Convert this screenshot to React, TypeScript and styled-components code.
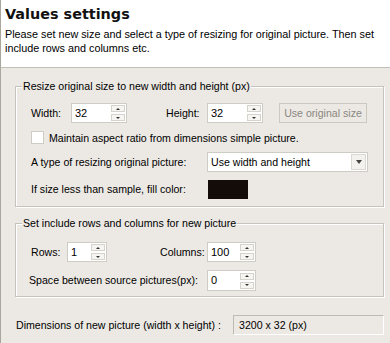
import React from "react";
import styled, { createGlobalStyle } from "styled-components";

const Global = createGlobalStyle`
  html, body { margin: 0; padding: 0; background: #ECE9E4; }
  body { font-family: "Liberation Sans", Arial, sans-serif; font-size: 10.6px; color: #000; }
  * { box-sizing: border-box; }
`;

const Page = styled.div`
  width: 390px;
  height: 343px;
  background: #ECE9E4;
  border-left: 1px solid #a9a69e;
  overflow: hidden;
`;

const Header = styled.header`
  background: #fff;
  height: 68px;
  padding: 5px 0 0 4px;
  border-bottom: 1px solid #c2bfb8;
`;

const Title = styled.h1`
  margin: 0;
  font-family: "DejaVu Sans", Verdana, sans-serif;
  font-weight: bold;
  font-size: 14.4px;
  line-height: 18px;
  color: #111;
`;

const Description = styled.p`
  margin: 4px 0 0;
  width: 382px;
  font-size: 10.8px;
  line-height: 14px;
`;

const Body = styled.main`
  padding: 0 6px 0 14px;
`;

const Group = styled.section<{ $top: number }>`
  margin-top: ${(p) => p.$top}px;
  border: 1px solid #c6c3bb;
  box-shadow: inset 1px 1px 0 #fff, 1px 1px 0 #fff;
`;

const Legend = styled.div`
  width: fit-content;
  margin: -7px 0 0 6px;
  padding: 0 1px;
  background: #ECE9E4;
  line-height: 13px;
`;

const Grid = styled.div<{ $cols: string; $pad: string }>`
  display: grid;
  grid-template-columns: ${(p) => p.$cols};
  row-gap: 8px;
  padding: ${(p) => p.$pad};
  align-items: center;
`;

const Label = styled.span<{ $span?: string; $shift?: number }>`
  grid-column: ${(p) => p.$span || "auto"};
  margin-left: ${(p) => p.$shift || 0}px;
  white-space: nowrap;
  line-height: 13px;
`;

const SpinBox = styled.div<{ $w: number; $h: number }>`
  width: ${(p) => p.$w}px;
  height: ${(p) => p.$h}px;
  background: #fff;
  border: 1px solid #cfccc5;
  display: flex;
  align-items: center;
  justify-content: space-between;
  padding: 0 1px 0 3px;
`;

const SpinValue = styled.span`
  line-height: 13px;
  font-size: 11px;
`;

const SpinButtons = styled.div`
  display: flex;
  flex-direction: column;
  gap: 2px;
`;

const SpinButton = styled.div`
  width: 14px;
  height: 7px;
  border: 1px solid #d6d3cc;
  background: #f6f5f2;
  display: flex;
  align-items: center;
  justify-content: center;
`;

const Arrow = styled.span<{ $down?: boolean }>`
  width: 0;
  height: 0;
  border-left: 2px solid transparent;
  border-right: 2px solid transparent;
  ${(p) => (p.$down ? "border-top: 2px solid #333;" : "border-bottom: 2px solid #333;")}
`;

const Button = styled.div`
  height: 20px;
  border: 1px solid #cbc8c0;
  background: #ECE9E4;
  color: #8a877f;
  display: flex;
  align-items: center;
  justify-content: center;
  white-space: nowrap;
`;

const CheckRow = styled.label`
  grid-column: 1 / -1;
  display: flex;
  align-items: center;
  gap: 5px;
  height: 13px;
`;

const CheckBox = styled.span`
  width: 13px;
  height: 13px;
  background: #fff;
  border: 1px solid #cfccc5;
`;

const Select = styled.div`
  grid-column: 5 / 8;
  height: 20px;
  width: 161px;
  background: #fff;
  border: 1px solid #cfccc5;
  display: flex;
  align-items: center;
  justify-content: space-between;
  padding: 0 1px 0 3px;
`;

const SelectButton = styled.div`
  width: 15px;
  height: 16px;
  background: #f3f2ee;
  border: 1px solid #dcd9d2;
  display: flex;
  align-items: center;
  justify-content: center;
`;

const SelectArrow = styled.span`
  width: 0;
  height: 0;
  border-left: 3px solid transparent;
  border-right: 3px solid transparent;
  border-top: 4px solid #444;
`;

const Swatch = styled.div<{ $color: string }>`
  grid-column: 5;
  margin-left: 1px;
  width: 40px;
  height: 19px;
  background: ${(p) => p.$color};
`;

const ResultRow = styled.div`
  margin-top: 18px;
  display: flex;
  align-items: center;
`;

const ResultLabel = styled.span`
  width: 218px;
  padding-left: 1px;
  white-space: nowrap;
`;

const ResultBox = styled.div`
  width: 151px;
  height: 20px;
  border-top: 1px solid #bdbab2;
  border-left: 1px solid #bdbab2;
  border-right: 1px solid #fff;
  border-bottom: 1px solid #fff;
  background: #ECE9E4;
  display: flex;
  align-items: center;
  padding-left: 5px;
`;

function Spin({ value, w, h = 20 }: { value: string; w: number; h?: number }) {
  return (
    <SpinBox $w={w} $h={h}>
      <SpinValue>{value}</SpinValue>
      <SpinButtons>
        <SpinButton>
          <Arrow />
        </SpinButton>
        <SpinButton>
          <Arrow $down />
        </SpinButton>
      </SpinButtons>
    </SpinBox>
  );
}

export default function App() {
  return (
    <Page>
      <Global />
      <Header>
        <Title>Values settings</Title>
        <Description>
          Please set new size and select a type of resizing for original picture. Then set include rows and columns etc.
        </Description>
      </Header>
      <Body>
        <Group $top={18}>
          <Legend>Resize original size to new width and height (px)</Legend>
          <Grid $cols="40px 56px 39px 41px 56px 16px 88px" $pad="10px 0 7px 15px">
            <Label>Width:</Label>
            <Spin value="32" w={56} />
            <span />
            <Label>Height:</Label>
            <Spin value="32" w={56} />
            <span />
            <Button>Use original size</Button>

            <CheckRow>
              <CheckBox />
              <span>Maintain aspect ratio from dimensions simple picture.</span>
            </CheckRow>

            <Label $span="1 / 5">A type of resizing original picture:</Label>
            <Select>
              <span>Use width and height</span>
              <SelectButton>
                <SelectArrow />
              </SelectButton>
            </Select>

            <Label $span="1 / 5">If size less than sample, fill color:</Label>
            <Swatch $color="#140c08" />
          </Grid>
        </Group>

        <Group $top={16}>
          <Legend>Set include rows and columns for new picture</Legend>
          <Grid $cols="36px 40px 53px 47px 49px" $pad="12px 0 5px 15px">
            <Label>Rows:</Label>
            <Spin value="1" w={40} />
            <span />
            <Label>Columns:</Label>
            <Spin value="100" w={49} />

            <Label $span="1 / 5" $shift={-2}>Space between source pictures(px):</Label>
            <Spin value="0" w={49} h={21} />
          </Grid>
        </Group>

        <ResultRow>
          <ResultLabel>Dimensions of new picture (width x height) :</ResultLabel>
          <ResultBox>3200 x 32 (px)</ResultBox>
        </ResultRow>
      </Body>
    </Page>
  );
}
